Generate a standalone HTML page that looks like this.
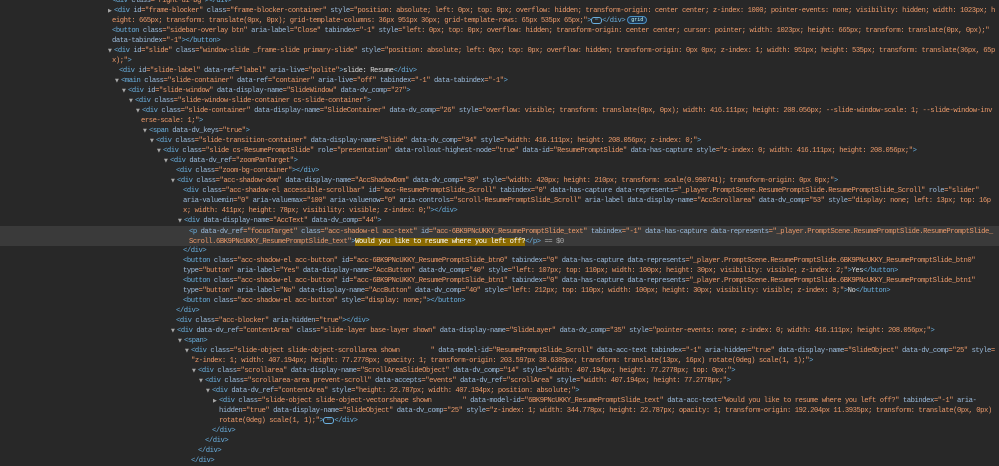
<!DOCTYPE html>
<html><head><meta charset="utf-8"><style>
html,body{margin:0;padding:0;width:999px;height:466px;overflow:hidden;background:#282828;}
.l{position:absolute;height:10px;line-height:10px;white-space:pre;font-family:"Liberation Mono",monospace;font-size:7.2px;letter-spacing:-0.45px;color:#d0d0d0;}
.b{color:#6ab0e0}.n{color:#9bbbdc}.v{color:#ec9a6a}.x{color:#d8d8d8}
.ar{position:absolute;font-size:5px;color:#a8a8a8;line-height:10px;font-family:"DejaVu Sans",sans-serif;}
.hl{position:absolute;left:0;width:999px;top:226px;height:20px;background:#3a3a3a;}
.sel{background:#8a6a00;color:#fff}
.dots{display:inline-block;border:1px solid #6ab0e0;border-radius:3px;height:5px;line-height:3px;width:9px;text-align:center;color:#6ab0e0;font-size:6px;letter-spacing:0;vertical-align:middle}
.badge{display:inline-block;border:1px solid #4b8fc0;border-radius:4px;padding:0 3px;height:6px;line-height:6px;font-size:5px;letter-spacing:0;color:#cfe;background:#1d3550;vertical-align:middle;margin-left:2px}
</style></head><body>
<div class="hl"></div>

<div class="l" style="top:-4px;left:112px"><span class="b">&lt;div</span> <span class="n">class</span><span class="v">="right-ui-bg"</span><span class="b">&gt;&lt;/div&gt;</span></div>

<span class="ar" style="top:6px;left:108px">▶</span>
<div class="l" style="top:6px;left:114px"><span class="b">&lt;div</span> <span class="n">id</span><span class="v">="frame-blocker"</span> <span class="n">class</span><span class="v">="frame-blocker-container"</span> <span class="n">style</span><span class="v">="position: absolute; left: 0px; top: 0px; overflow: hidden; transform-origin: center center; z-index: 1000; pointer-events: none; visibility: hidden; width: 1023px; h</span></div>
<div class="l" style="top:16px;left:112px"><span class="v">eight: 665px; transform: translate(0px, 0px); grid-template-columns: 36px 951px 36px; grid-template-rows: 65px 535px 65px;"</span><span class="b">&gt;</span><span class="dots">⋯</span><span class="b">&lt;/div&gt;</span><span class="badge">grid</span></div>
<div class="l" style="top:26px;left:112px"><span class="b">&lt;button</span> <span class="n">class</span><span class="v">="sidebar-overlay btn"</span> <span class="n">aria-label</span><span class="v">="Close"</span> <span class="n">tabindex</span><span class="v">="-1"</span> <span class="n">style</span><span class="v">="left: 0px; top: 0px; overflow: hidden; transform-origin: center center; cursor: pointer; width: 1023px; height: 665px; transform: translate(0px, 0px);"</span></div>
<div class="l" style="top:36px;left:112px"><span class="n">data-tabindex</span><span class="v">="-1"</span><span class="b">&gt;&lt;/button&gt;</span></div>

<span class="ar" style="top:46px;left:108px">▼</span>
<div class="l" style="top:46px;left:114px"><span class="b">&lt;div</span> <span class="n">id</span><span class="v">="slide"</span> <span class="n">class</span><span class="v">="window-slide _frame-slide primary-slide"</span> <span class="n">style</span><span class="v">="position: absolute; left: 0px; top: 0px; overflow: hidden; transform-origin: 0px 0px; z-index: 1; width: 951px; height: 535px; transform: translate(36px, 65p</span></div>
<div class="l" style="top:56px;left:112px"><span class="v">x);"</span><span class="b">&gt;</span></div>
<div class="l" style="top:66px;left:119px"><span class="b">&lt;div</span> <span class="n">id</span><span class="v">="slide-label"</span> <span class="n">data-ref</span><span class="v">="label"</span> <span class="n">aria-live</span><span class="v">="polite"</span><span class="b">&gt;</span><span class="x">slide: Resume</span><span class="b">&lt;/div&gt;</span></div>

<span class="ar" style="top:76px;left:115px">▼</span>
<div class="l" style="top:76px;left:121px"><span class="b">&lt;main</span> <span class="n">class</span><span class="v">="slide-container"</span> <span class="n">data-ref</span><span class="v">="container"</span> <span class="n">aria-live</span><span class="v">="off"</span> <span class="n">tabindex</span><span class="v">="-1"</span> <span class="n">data-tabindex</span><span class="v">="-1"</span><span class="b">&gt;</span></div>
<span class="ar" style="top:86px;left:122px">▼</span>
<div class="l" style="top:86px;left:128px"><span class="b">&lt;div</span> <span class="n">id</span><span class="v">="slide-window"</span> <span class="n">data-display-name</span><span class="v">="SlideWindow"</span> <span class="n">data-dv_comp</span><span class="v">="27"</span><span class="b">&gt;</span></div>
<span class="ar" style="top:96px;left:129px">▼</span>
<div class="l" style="top:96px;left:135px"><span class="b">&lt;div</span> <span class="n">class</span><span class="v">="slide-window-slide-container cs-slide-container"</span><span class="b">&gt;</span></div>
<span class="ar" style="top:106px;left:136px">▼</span>
<div class="l" style="top:106px;left:142px"><span class="b">&lt;div</span> <span class="n">class</span><span class="v">="slide-container"</span> <span class="n">data-display-name</span><span class="v">="SlideContainer"</span> <span class="n">data-dv_comp</span><span class="v">="26"</span> <span class="n">style</span><span class="v">="overflow: visible; transform: translate(0px, 0px); width: 416.111px; height: 208.056px; --slide-window-scale: 1; --slide-window-inv</span></div>
<div class="l" style="top:116px;left:141px"><span class="v">erse-scale: 1;"</span><span class="b">&gt;</span></div>
<span class="ar" style="top:126px;left:143px">▼</span>
<div class="l" style="top:126px;left:149px"><span class="b">&lt;span</span> <span class="n">data-dv_keys</span><span class="v">="true"</span><span class="b">&gt;</span></div>
<span class="ar" style="top:136px;left:150px">▼</span>
<div class="l" style="top:136px;left:156px"><span class="b">&lt;div</span> <span class="n">class</span><span class="v">="slide-transition-container"</span> <span class="n">data-display-name</span><span class="v">="Slide"</span> <span class="n">data-dv_comp</span><span class="v">="34"</span> <span class="n">style</span><span class="v">="width: 416.111px; height: 208.056px; z-index: 0;"</span><span class="b">&gt;</span></div>
<span class="ar" style="top:146px;left:157px">▼</span>
<div class="l" style="top:146px;left:163px"><span class="b">&lt;div</span> <span class="n">class</span><span class="v">="slide cs-ResumePromptSlide"</span> <span class="n">role</span><span class="v">="presentation"</span> <span class="n">data-rollout-highest-node</span><span class="v">="true"</span> <span class="n">data-id</span><span class="v">="ResumePromptSlide"</span> <span class="n">data-has-capture</span> <span class="n">style</span><span class="v">="z-index: 0; width: 416.111px; height: 208.056px;"</span><span class="b">&gt;</span></div>
<span class="ar" style="top:156px;left:164px">▼</span>
<div class="l" style="top:156px;left:170px"><span class="b">&lt;div</span> <span class="n">data-dv_ref</span><span class="v">="zoomPanTarget"</span><span class="b">&gt;</span></div>
<div class="l" style="top:166px;left:176px"><span class="b">&lt;div</span> <span class="n">class</span><span class="v">="zoom-bg-container"</span><span class="b">&gt;&lt;/div&gt;</span></div>
<span class="ar" style="top:176px;left:171px">▼</span>
<div class="l" style="top:176px;left:177px"><span class="b">&lt;div</span> <span class="n">class</span><span class="v">="acc-shadow-dom"</span> <span class="n">data-display-name</span><span class="v">="AccShadowDom"</span> <span class="n">data-dv_comp</span><span class="v">="39"</span> <span class="n">style</span><span class="v">="width: 420px; height: 210px; transform: scale(0.990741); transform-origin: 0px 0px;"</span><span class="b">&gt;</span></div>
<div class="l" style="top:186px;left:183px"><span class="b">&lt;div</span> <span class="n">class</span><span class="v">="acc-shadow-el accessible-scrollbar"</span> <span class="n">id</span><span class="v">="acc-ResumePromptSlide_Scroll"</span> <span class="n">tabindex</span><span class="v">="0"</span> <span class="n">data-has-capture</span> <span class="n">data-represents</span><span class="v">="_player.PromptScene.ResumePromptSlide.ResumePromptSlide_Scroll"</span> <span class="n">role</span><span class="v">="slider"</span></div>
<div class="l" style="top:196px;left:183px"><span class="n">aria-valuemin</span><span class="v">="0"</span> <span class="n">aria-valuemax</span><span class="v">="100"</span> <span class="n">aria-valuenow</span><span class="v">="0"</span> <span class="n">aria-controls</span><span class="v">="scroll-ResumePromptSlide_Scroll"</span> <span class="n">aria-label</span> <span class="n">data-display-name</span><span class="v">="AccScrollarea"</span> <span class="n">data-dv_comp</span><span class="v">="53"</span> <span class="n">style</span><span class="v">="display: none; left: 13px; top: 16p</span></div>
<div class="l" style="top:206px;left:183px"><span class="v">x; width: 411px; height: 78px; visibility: visible; z-index: 0;"</span><span class="b">&gt;&lt;/div&gt;</span></div>
<span class="ar" style="top:216px;left:178px">▼</span>
<div class="l" style="top:216px;left:184px"><span class="b">&lt;div</span> <span class="n">data-display-name</span><span class="v">="AccText"</span> <span class="n">data-dv_comp</span><span class="v">="44"</span><span class="b">&gt;</span></div>
<div class="l" style="top:227px;left:189px"><span class="b">&lt;p</span> <span class="n">data-dv_ref</span><span class="v">="focusTarget"</span> <span class="n">class</span><span class="v">="acc-shadow-el acc-text"</span> <span class="n">id</span><span class="v">="acc-6BK9PNcUKKY_ResumePromptSlide_text"</span> <span class="n">tabindex</span><span class="v">="-1"</span> <span class="n">data-has-capture</span> <span class="n">data-represents</span><span class="v">="_player.PromptScene.ResumePromptSlide.ResumePromptSlide_</span></div>
<div class="l" style="top:237px;left:189px"><span class="v">Scroll.6BK9PNcUKKY_ResumePromptSlide_text"</span><span class="b">&gt;</span><span class="sel">Would you like to resume where you left off?</span><span class="b">&lt;/p&gt;</span><span style="color:#aaa"> == $0</span></div>
<div class="l" style="top:246px;left:183px"><span class="b">&lt;/div&gt;</span></div>
<div class="l" style="top:256px;left:183px"><span class="b">&lt;button</span> <span class="n">class</span><span class="v">="acc-shadow-el acc-button"</span> <span class="n">id</span><span class="v">="acc-6BK9PNcUKKY_ResumePromptSlide_btn0"</span> <span class="n">tabindex</span><span class="v">="0"</span> <span class="n">data-has-capture</span> <span class="n">data-represents</span><span class="v">="_player.PromptScene.ResumePromptSlide.6BK9PNcUKKY_ResumePromptSlide_btn0"</span></div>
<div class="l" style="top:266px;left:183px"><span class="n">type</span><span class="v">="button"</span> <span class="n">aria-label</span><span class="v">="Yes"</span> <span class="n">data-display-name</span><span class="v">="AccButton"</span> <span class="n">data-dv_comp</span><span class="v">="40"</span> <span class="n">style</span><span class="v">="left: 107px; top: 110px; width: 100px; height: 30px; visibility: visible; z-index: 2;"</span><span class="b">&gt;</span><span class="x">Yes</span><span class="b">&lt;/button&gt;</span></div>
<div class="l" style="top:276px;left:183px"><span class="b">&lt;button</span> <span class="n">class</span><span class="v">="acc-shadow-el acc-button"</span> <span class="n">id</span><span class="v">="acc-6BK9PNcUKKY_ResumePromptSlide_btn1"</span> <span class="n">tabindex</span><span class="v">="0"</span> <span class="n">data-has-capture</span> <span class="n">data-represents</span><span class="v">="_player.PromptScene.ResumePromptSlide.6BK9PNcUKKY_ResumePromptSlide_btn1"</span></div>
<div class="l" style="top:286px;left:183px"><span class="n">type</span><span class="v">="button"</span> <span class="n">aria-label</span><span class="v">="No"</span> <span class="n">data-display-name</span><span class="v">="AccButton"</span> <span class="n">data-dv_comp</span><span class="v">="40"</span> <span class="n">style</span><span class="v">="left: 212px; top: 110px; width: 100px; height: 30px; visibility: visible; z-index: 3;"</span><span class="b">&gt;</span><span class="x">No</span><span class="b">&lt;/button&gt;</span></div>
<div class="l" style="top:296px;left:183px"><span class="b">&lt;button</span> <span class="n">class</span><span class="v">="acc-shadow-el acc-button"</span> <span class="n">style</span><span class="v">="display: none;"</span><span class="b">&gt;&lt;/button&gt;</span></div>
<div class="l" style="top:306px;left:176px"><span class="b">&lt;/div&gt;</span></div>
<div class="l" style="top:316px;left:176px"><span class="b">&lt;div</span> <span class="n">class</span><span class="v">="acc-blocker"</span> <span class="n">aria-hidden</span><span class="v">="true"</span><span class="b">&gt;&lt;/div&gt;</span></div>
<span class="ar" style="top:326px;left:171px">▼</span>
<div class="l" style="top:326px;left:177px"><span class="b">&lt;div</span> <span class="n">data-dv_ref</span><span class="v">="contentArea"</span> <span class="n">class</span><span class="v">="slide-layer base-layer shown"</span> <span class="n">data-display-name</span><span class="v">="SlideLayer"</span> <span class="n">data-dv_comp</span><span class="v">="35"</span> <span class="n">style</span><span class="v">="pointer-events: none; z-index: 0; width: 416.111px; height: 208.056px;"</span><span class="b">&gt;</span></div>
<span class="ar" style="top:336px;left:178px">▼</span>
<div class="l" style="top:336px;left:184px"><span class="b">&lt;span&gt;</span></div>
<span class="ar" style="top:346px;left:185px">▼</span>
<div class="l" style="top:346px;left:191px"><span class="b">&lt;div</span> <span class="n">class</span><span class="v">="slide-object slide-object-scrollarea shown        "</span> <span class="n">data-model-id</span><span class="v">="ResumePromptSlide_Scroll"</span> <span class="n">data-acc-text</span> <span class="n">tabindex</span><span class="v">="-1"</span> <span class="n">aria-hidden</span><span class="v">="true"</span> <span class="n">data-display-name</span><span class="v">="SlideObject"</span> <span class="n">data-dv_comp</span><span class="v">="25"</span> <span class="n">style</span><span class="v">=</span></div>
<div class="l" style="top:356px;left:191px"><span class="v">"z-index: 1; width: 407.194px; height: 77.2778px; opacity: 1; transform-origin: 203.597px 38.6389px; transform: translate(13px, 16px) rotate(0deg) scale(1, 1);"</span><span class="b">&gt;</span></div>
<span class="ar" style="top:366px;left:192px">▼</span>
<div class="l" style="top:366px;left:198px"><span class="b">&lt;div</span> <span class="n">class</span><span class="v">="scrollarea"</span> <span class="n">data-display-name</span><span class="v">="ScrollAreaSlideObject"</span> <span class="n">data-dv_comp</span><span class="v">="14"</span> <span class="n">style</span><span class="v">="width: 407.194px; height: 77.2778px; top: 0px;"</span><span class="b">&gt;</span></div>
<span class="ar" style="top:376px;left:199px">▼</span>
<div class="l" style="top:376px;left:205px"><span class="b">&lt;div</span> <span class="n">class</span><span class="v">="scrollarea-area prevent-scroll"</span> <span class="n">data-accepts</span><span class="v">="events"</span> <span class="n">data-dv_ref</span><span class="v">="scrollArea"</span> <span class="n">style</span><span class="v">="width: 407.194px; height: 77.2778px;"</span><span class="b">&gt;</span></div>
<span class="ar" style="top:386px;left:206px">▼</span>
<div class="l" style="top:386px;left:212px"><span class="b">&lt;div</span> <span class="n">data-dv_ref</span><span class="v">="contentArea"</span> <span class="n">style</span><span class="v">="height: 22.787px; width: 407.194px; position: absolute;"</span><span class="b">&gt;</span></div>
<span class="ar" style="top:396px;left:213px">▶</span>
<div class="l" style="top:396px;left:219px"><span class="b">&lt;div</span> <span class="n">class</span><span class="v">="slide-object slide-object-vectorshape shown        "</span> <span class="n">data-model-id</span><span class="v">="6BK9PNcUKKY_ResumePromptSlide_text"</span> <span class="n">data-acc-text</span><span class="v">="Would you like to resume where you left off?"</span> <span class="n">tabindex</span><span class="v">="-1"</span> <span class="n">aria-</span></div>
<div class="l" style="top:406px;left:219px"><span class="n">hidden</span><span class="v">="true"</span> <span class="n">data-display-name</span><span class="v">="SlideObject"</span> <span class="n">data-dv_comp</span><span class="v">="25"</span> <span class="n">style</span><span class="v">="z-index: 1; width: 344.778px; height: 22.787px; opacity: 1; transform-origin: 192.204px 11.3935px; transform: translate(0px, 0px)</span></div>
<div class="l" style="top:416px;left:219px"><span class="v">rotate(0deg) scale(1, 1);"</span><span class="b">&gt;</span><span class="dots">⋯</span><span class="b">&lt;/div&gt;</span></div>
<div class="l" style="top:426px;left:212px"><span class="b">&lt;/div&gt;</span></div>
<div class="l" style="top:436px;left:205px"><span class="b">&lt;/div&gt;</span></div>
<div class="l" style="top:446px;left:198px"><span class="b">&lt;/div&gt;</span></div>
<div class="l" style="top:456px;left:191px"><span class="b">&lt;/div&gt;</span></div>
</body></html>
